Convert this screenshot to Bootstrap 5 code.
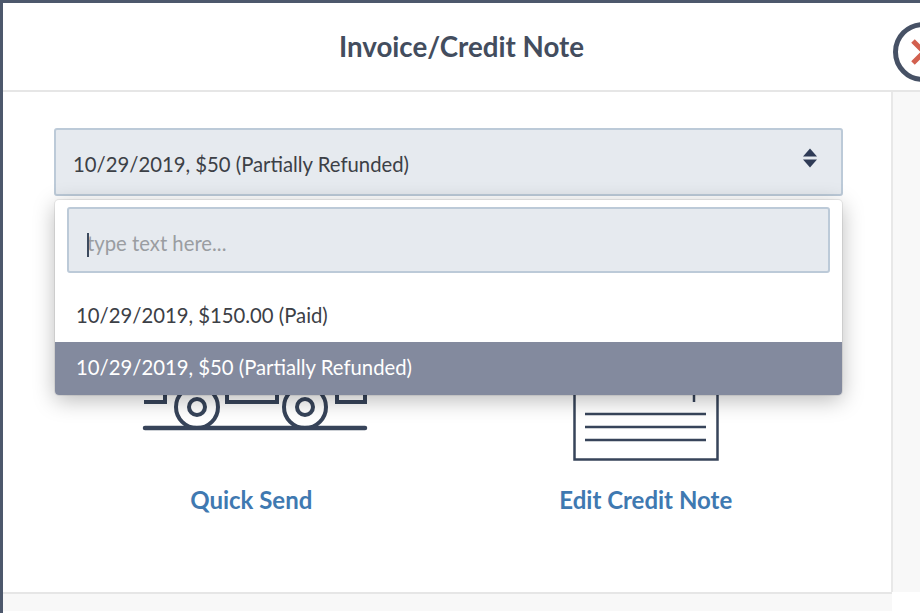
<!DOCTYPE html>
<html lang="en">
<head>
    <meta charset="UTF-8">
    <meta name="viewport" content="width=device-width, initial-scale=1.0">
    <title>Invoice/Credit Note</title>
    <link href="https://cdn.jsdelivr.net/npm/bootstrap@5.3.1/dist/css/bootstrap.min.css" rel="stylesheet">
    <style>
        html, body { height: 100%; }
        body { background: #4d586c; font-family: "Lato", "Liberation Sans", sans-serif; overflow: hidden; padding: 3px 0 0 3px; }
        .sheet { height: 610px; background: #fff; position: relative; overflow: hidden; }
        .sheet-head { height: 89px; border-bottom: 2px solid #e6e6e6; }
        .sheet-title { font-size: 27.7px; font-weight: 700; color: #434d5e; margin: 0; }
        .close-ring { position: absolute; left: 890px; top: 19px; }
        .sheet-main { height: 500px; }
        .sheet-pane { width: 890px; padding: 36px 48px 0 51px; border-right: 2px solid #e8e8e8; }
        .side-strip { background: #f8f8f8; }
        .sheet-foot { height: 19px; width: 889px; background: #f8f8f8; border-top: 2px solid #e6e6e6; }
        .picker { position: relative; }
        .picker-box { height: 68px; background: #e6eaef; border: 2px solid #bccad8; border-radius: 3px; padding: 0 24px 0 17px; font-size: 20.3px; color: #3c4046; }
        .picker-box span { padding-top: 5px; }
        .picker-menu { position: absolute; top: 72px; left: 1px; right: 1px; background: #fff; border-radius: 4px; box-shadow: 0 0 0 1px rgba(0, 0, 0, .07), 0 5px 22px rgba(0, 0, 0, .28); padding-top: 7px; z-index: 5; }
        .picker-search { display: block; width: 763px; height: 66px; margin-left: 12px; background: #e6eaef; border: 2px solid #bccad8; border-radius: 3px; padding: 5px 18px 0; font-size: 20.3px; color: #3c4046; outline: 0; }
        .picker-search::placeholder { color: #9a9da1; opacity: 1; }
        .picker-opt { padding: 0 21px; font-size: 20.3px; color: #3c4046; height: 53px; }
        .picker-opt.first-opt { height: 69px; padding-top: 27px; }
        .picker-opt.is-picked { background: #838a9e; color: #fff; border-radius: 0 0 4px 4px; padding-bottom: 3px; }
        .fake-caret { position: absolute; left: 32px; top: 26px; width: 2px; height: 24px; background: #3c4a5e; }
        .action-icon { display: block; margin: 0 auto; }
        .action-row { margin-top: 116px; }
        .action-link { font-size: 24px; font-weight: 700; color: #3f79b1; text-decoration: none; display: block; text-align: center; margin-top: 20px; }
    </style>
</head>
<body>
    <div class="sheet">
        <div class="sheet-head d-flex align-items-center justify-content-center">
            <h1 class="sheet-title">Invoice/Credit Note</h1>
        </div>
        <svg class="close-ring" width="60" height="60" viewBox="0 0 60 60" aria-hidden="true">
            <circle cx="30" cy="30" r="27.5" fill="#fff" stroke="#465165" stroke-width="5"/>
            <path d="M20 19 L42 41 M42 19 L20 41" stroke="#d2604f" stroke-width="5"/>
        </svg>
        <div class="sheet-main d-flex">
            <div class="sheet-pane">
                <div class="picker">
                    <div class="picker-box d-flex align-items-center justify-content-between">
                        <span>10/29/2019, $50 (Partially Refunded)</span>
                        <svg width="14" height="20" viewBox="0 0 14 20" aria-hidden="true" class="mb-2">
                            <path d="M7 0.5 L14 8.5 H0 Z M0 11.5 H14 L7 19.5 Z" fill="#2f3b56"/>
                        </svg>
                    </div>
                    <div class="picker-menu">
                        <div class="position-relative">
                            <input class="picker-search" type="text" placeholder="type text here...">
                            <span class="fake-caret"></span>
                        </div>
                        <div class="picker-opt first-opt">10/29/2019, $150.00 (Paid)</div>
                        <div class="picker-opt is-picked d-flex align-items-center">10/29/2019, $50 (Partially Refunded)</div>
                    </div>
                </div>
                <div class="row g-0 action-row">
                    <div class="col-6">
                        <svg class="action-icon" width="236" height="150" viewBox="-10 0 236 150" fill="none" stroke="#37445a" stroke-width="4" aria-hidden="true">
                            <path d="M1 90 H22 V80 M84 80 V90 H134 V80 M194 80 V90 H222 V80"/>
                            <circle cx="54" cy="95" r="21" fill="#fff"/>
                            <circle cx="54" cy="95" r="8"/>
                            <circle cx="162" cy="95" r="21" fill="#fff"/>
                            <circle cx="162" cy="95" r="8"/>
                            <path d="M2 116 H222" stroke-linecap="round" stroke-width="4.5"/>
                        </svg>
                        <a class="action-link" href="#">Quick Send</a>
                    </div>
                    <div class="col-6">
                        <svg class="action-icon" width="146" height="150" viewBox="0 0 146 150" fill="none" stroke="#37445a" aria-hidden="true">
                            <path d="M1.5 0 V147.5 H144.5 V0" stroke-width="2.5"/>
                            <path d="M121 60 V90" stroke-width="2.5"/>
                            <path d="M12 102 H133 M12 115 H133 M12 128 H133" stroke-width="2.5"/>
                        </svg>
                        <a class="action-link" href="#">Edit Credit Note</a>
                    </div>
                </div>
            </div>
            <div class="side-strip flex-grow-1"></div>
        </div>
        <div class="sheet-foot"></div>
    </div>
    <script src="https://cdn.jsdelivr.net/npm/bootstrap@5.3.1/dist/js/bootstrap.bundle.min.js"></script>
</body>
</html>
